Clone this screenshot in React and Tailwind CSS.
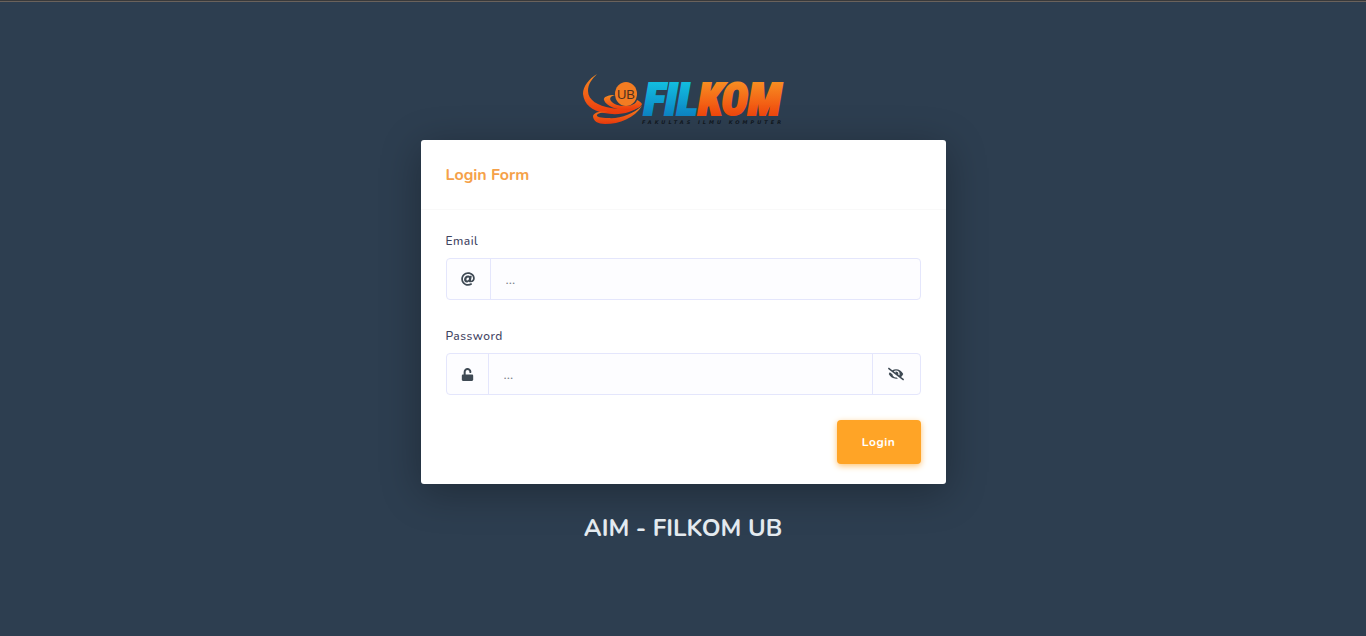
import { useState } from "react";
import { FaAt, FaEyeSlash, FaUnlock } from "react-icons/fa";

function Logo() {
  return (
    <svg viewBox="0 0 200 52" className="h-13 w-50 overflow-visible" role="img" aria-label="FILKOM Fakultas Ilmu Komputer">
      <defs>
        <linearGradient id="flame" x1="0" y1="0" x2="0" y2="1">
          <stop offset="0" stopColor="#f58a22" />
          <stop offset="1" stopColor="#ee3a0c" />
        </linearGradient>
        <linearGradient id="orange" gradientUnits="userSpaceOnUse" x1="0" y1="8" x2="0" y2="44">
          <stop offset="0" stopColor="#f78f22" />
          <stop offset="1" stopColor="#f0440c" />
        </linearGradient>
        <linearGradient id="blue" gradientUnits="userSpaceOnUse" x1="0" y1="8" x2="0" y2="44">
          <stop offset="0" stopColor="#12bfe0" />
          <stop offset="1" stopColor="#0d82c4" />
        </linearGradient>
      </defs>
      <path d="M14 1C6 6 0 13 0 21C1 31 9 38 21 40C35 43 49 40 57 33C47 36 37 37 28 35C15 33 5 27 5 18C5 11 9 6 14 1Z" fill="url(#flame)" />
      <path d="M25 39C17 38 11 39 10 43C10 48 15 51 22 51C37 51 51 45 59 33C50 41 37 46 25 45C18 45 13 44 14 42C15 40 20 39 25 39Z" fill="url(#flame)" />
      <ellipse cx="43" cy="21" rx="11" ry="12" fill="#f37c22" />
      <path d="M32 22C25 22 20 24 21 27C23 33 33 37 44 37C51 37 58 35 59 31C58 29 56 28 54 27C53 31 48 33 42 33C36 33 30 31 28 28C26 25 28 23 32 22Z" fill="url(#flame)" />
      <text x="43" y="26" textAnchor="middle" fontFamily="Liberation Sans, sans-serif" fontSize="13" fill="#50311f">UB</text>
      <text x="61" y="42" fontFamily="Roboto Condensed, Roboto, sans-serif" fontSize="45" fontWeight="900" fontStyle="italic" strokeWidth="2">
        <tspan fill="url(#blue)" stroke="url(#blue)">FIL</tspan>
        <tspan fill="url(#orange)" stroke="url(#orange)">KOM</tspan>
      </text>
      <text x="59" y="51" fontFamily="DejaVu Sans, sans-serif" fontSize="5" fontWeight="700" fontStyle="italic" letterSpacing="3" fill="#111820">FAKULTAS ILMU KOMPUTER</text>
    </svg>
  );
}

const field = "flex h-[42px] overflow-hidden rounded border border-[#e4e6fc] bg-[#fdfdff] text-[#3f4a54] focus-within:border-[#ffa426]";
const input = "min-w-0 flex-1 bg-transparent px-[15px] pt-0.5 text-sm text-[#495057] outline-none placeholder:text-[#7b8188]";
const label = "mb-[7px] block text-xs leading-5 font-medium tracking-[0.5px] text-[#3f435f]";

export default function App() {
  const [visible, setVisible] = useState(false);
  return (
    <div className="flex min-h-screen flex-col border-t border-[#38393b] bg-[#2d3e50] font-[Nunito,'Open_Sans',sans-serif]">
      <div className="h-px bg-[#6a625c]" />
      <main className="flex flex-col items-center px-4 pt-[71px] pb-12">
        <Logo />
        <section className="mt-[15px] w-full max-w-[525px] rounded-[3px] bg-white shadow-[0_8px_40px_rgba(0,0,0,0.3)]">
          <header className="flex min-h-[70px] items-center border-b border-[#f9f9f9] px-[25px]">
            <h1 className="text-base leading-7 font-bold text-[#f5a149]">Login Form</h1>
          </header>
          <form className="px-[25px] pt-[21px] pb-5" onSubmit={(event) => event.preventDefault()}>
            <label htmlFor="email" className={label}>Email</label>
            <div className={field}>
              <span className="grid w-11 place-items-center border-r border-[#e4e6fc]"><FaAt size={14} /></span>
              <input id="email" type="email" placeholder="..." className={input} />
            </div>
            <div className="mt-[26px]">
              <label htmlFor="password" className={label}>Password</label>
              <div className={field}>
                <span className="grid w-[42px] place-items-center border-r border-[#e4e6fc]"><FaUnlock size={13} /></span>
                <input id="password" type={visible ? "text" : "password"} placeholder="..." className={input} />
                <button type="button" aria-label="Toggle password visibility" onClick={() => setVisible(!visible)} className="grid w-12 place-items-center border-l border-[#e4e6fc]">
                  <FaEyeSlash size={16} />
                </button>
              </div>
            </div>
            <div className="mt-[25px] flex justify-end">
              <button type="submit" className="h-11 w-21 rounded bg-[#ffa426] text-xs font-bold tracking-[0.5px] text-white shadow-[0_2px_6px_#ffc473]">Login</button>
            </div>
          </form>
        </section>
        <h2 className="mt-[26px] text-2xl leading-9 font-bold text-[#e3eaef]">AIM - FILKOM UB</h2>
      </main>
    </div>
  );
}
